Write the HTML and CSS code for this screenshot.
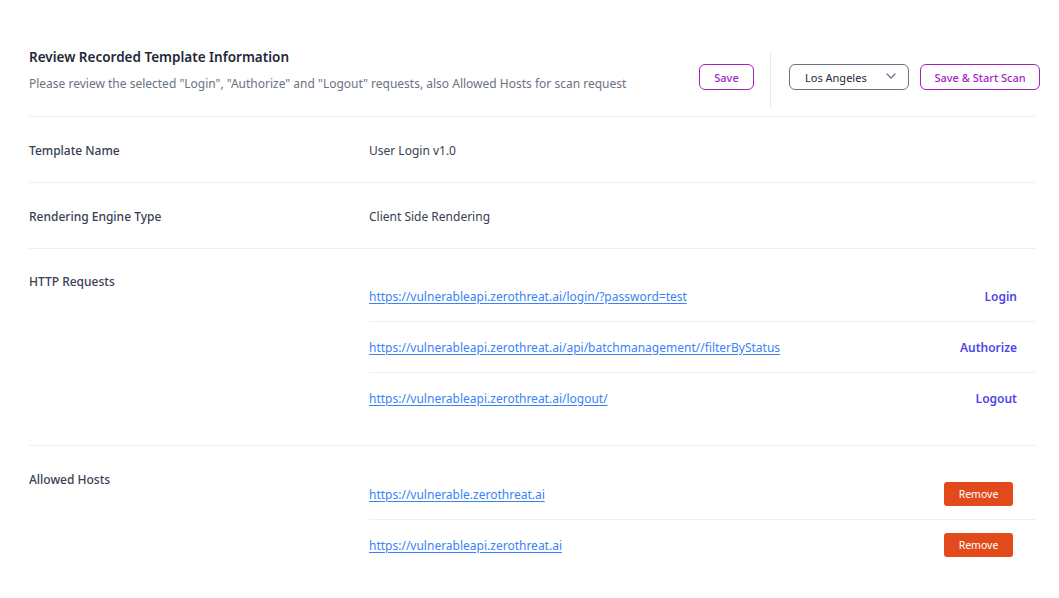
FILE: index.html
```html
<!DOCTYPE html>
<html>
<head>
<meta charset="utf-8">
<link rel="stylesheet" href="styles.css">
</head>
<body>
<div class="page">
  <header class="head">
    <div class="head-text">
      <h1 class="title">Review Recorded Template Information</h1>
      <p class="subtitle">Please review the selected "Login", "Authorize" and "Logout" requests, also Allowed Hosts for scan request</p>
    </div>
    <div class="head-actions">
      <button class="btn-outline btn-save">Save</button>
      <div class="vsep"></div>
      <div class="select">
        <span>Los Angeles</span>
        <svg class="chev" width="10" height="6" viewBox="0 0 10 6"><path d="M1 1l4 4 4-4" fill="none" stroke="#6b7280" stroke-width="1.2" stroke-linecap="round" stroke-linejoin="round"/></svg>
      </div>
      <button class="btn-outline btn-scan">Save &amp; Start Scan</button>
    </div>
  </header>

  <section class="row">
    <div class="label">Template Name</div>
    <div class="value">User Login v1.0</div>
  </section>

  <section class="row">
    <div class="label">Rendering Engine Type</div>
    <div class="value">Client Side Rendering</div>
  </section>

  <section class="row row-list">
    <div class="label">HTTP Requests</div>
    <div class="list">
      <div class="item req">
        <a href="#" class="link">https://vulnerableapi.zerothreat.ai/login/?password=test</a>
        <span class="tag">Login</span>
      </div>
      <div class="item req">
        <a href="#" class="link">https://vulnerableapi.zerothreat.ai/api/batchmanagement//filterByStatus</a>
        <span class="tag">Authorize</span>
      </div>
      <div class="item req">
        <a href="#" class="link">https://vulnerableapi.zerothreat.ai/logout/</a>
        <span class="tag">Logout</span>
      </div>
    </div>
  </section>

  <section class="row row-list hosts last">
    <div class="label">Allowed Hosts</div>
    <div class="list">
      <div class="item host">
        <a href="#" class="link">https://vulnerable.zerothreat.ai</a>
        <button class="btn-remove">Remove</button>
      </div>
      <div class="item host">
        <a href="#" class="link">https://vulnerableapi.zerothreat.ai</a>
        <button class="btn-remove">Remove</button>
      </div>
    </div>
  </section>
</div>
</body>
</html>
```

FILE: styles.css
```css
* { box-sizing: border-box; }
html, body { margin: 0; padding: 0; background: #fff; }
body {
  font-family: "Noto Sans", "Open Sans", sans-serif;
  color: #374151;
  font-size: 12px;
}
.page {
  padding: 45px 23px 0 29px;
}
.head {
  display: flex;
  justify-content: space-between;
  align-items: flex-start;
  padding: 0 0 9px 0;
  border-bottom: 1px solid #f0f0f2;
}
.head-text { padding-top: 2px; }
.title {
  margin: 0;
  font-size: 13.5px;
  font-weight: 600;
  color: #1f2937;
  line-height: 20px;
}
.subtitle {
  margin: 8px 0 0 0;
  font-size: 12px;
  color: #6b7280;
  line-height: 18px;
}
.head-actions {
  display: flex;
  align-items: flex-start;
  margin-top: 8px;
  margin-right: -4px;
}
.btn-outline {
  font-family: inherit;
  background: #fff;
  border: 1px solid #a61fbf;
  color: #a61fbf;
  border-radius: 6px;
  height: 26px;
  font-size: 11px;
  font-weight: 500;
  padding: 0;
  margin-top: 11px;
  cursor: pointer;
}
.btn-save { width: 55px; }
.btn-scan { width: 120px; }
.vsep {
  width: 1px;
  height: 54px;
  background: #e5e7eb;
  margin: 0 18px 0 16px;
}
.select {
  width: 120px;
  height: 26px;
  margin-top: 11px;
  border: 1px solid #6b7280;
  border-radius: 6px;
  display: flex;
  align-items: center;
  justify-content: space-between;
  padding: 0 12px 0 15px;
  font-size: 11px;
  color: #1f2937;
  margin-right: 11px;
}
.chev { margin-top: -2px; }
.row {
  display: flex;
  align-items: flex-start;
  border-bottom: 1px solid #f0f0f2;
  padding: 24px 0 21px;
}
.row.last { border-bottom: none; }
.label {
  width: 340px;
  flex: none;
  font-size: 12px;
  font-weight: 500;
  color: #374151;
  line-height: 20px;
}
.value {
  line-height: 20px;
  color: #374151;
}
.row-list { padding: 22px 0 22px; }
.row-list .label { padding-top: 1px; }
.row-list.hosts { padding-top: 23px; }
.list { flex: 1; }
.item {
  display: flex;
  align-items: center;
  justify-content: space-between;
  height: 51px;
  border-bottom: 1px solid #f0f0f2;
}
.item:last-child { border-bottom: none; height: 50px; }
.req { padding-right: 19px; }
.host { padding-right: 23px; }
.link {
  color: #3b82f6;
  text-decoration: underline;
  text-underline-offset: 2px;
  font-size: 12px;
}
.tag {
  color: #5046e5;
  font-weight: 600;
  font-size: 12px;
}
.btn-remove {
  font-family: inherit;
  background: #e34a1b;
  color: #fff;
  border: none;
  border-radius: 3px;
  width: 69px;
  height: 24px;
  font-size: 10.5px;
  cursor: pointer;
}
```
